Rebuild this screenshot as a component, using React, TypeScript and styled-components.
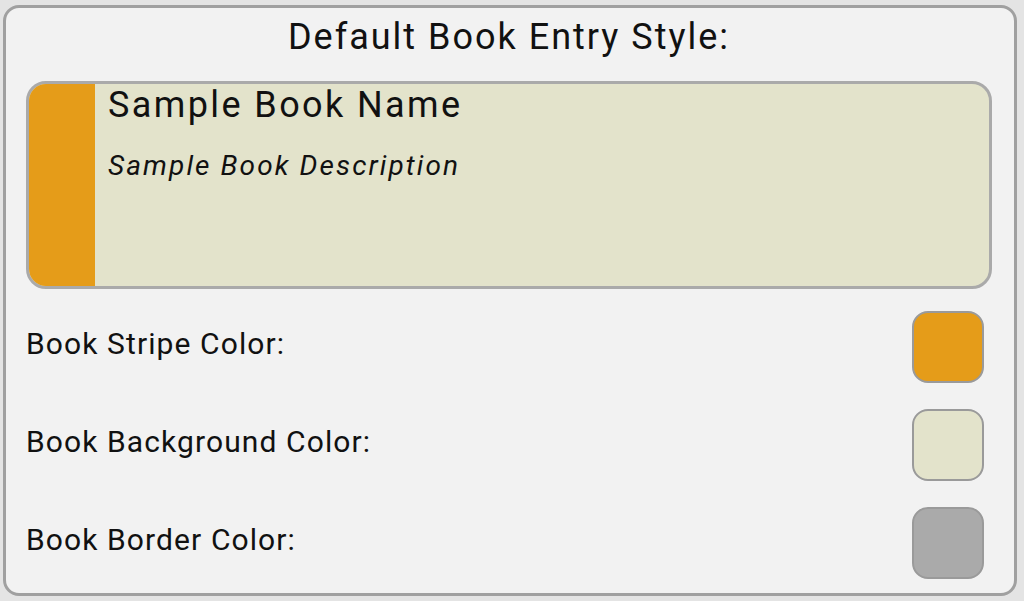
import React from "react";
import styled, { createGlobalStyle } from "styled-components";

const Global = createGlobalStyle`
  html, body { margin: 0; padding: 0; background: #e4e4e4; }
  body { font-family: Roboto, "Noto Sans", sans-serif; color: #111; }
  * { box-sizing: border-box; }
`;

const Card = styled.div`
  margin: 5px 7px 5px 3px;
  height: 591px;
  border: 3px solid #a0a0a0;
  border-radius: 16px;
  background: #f2f2f2;
  padding: 8px 22px 14px 20px;
  display: flex;
  flex-direction: column;
`;

const Title = styled.h1`
  margin: 0;
  font-size: 36px;
  font-weight: 400;
  line-height: 42px;
  letter-spacing: 2px;
  text-align: center;
`;

const Preview = styled.div<{ $bg: string; $border: string }>`
  margin-top: 23px;
  height: 208px;
  display: flex;
  border: 3px solid ${(p) => p.$border};
  border-radius: 20px;
  background: ${(p) => p.$bg};
  overflow: hidden;
`;

const Stripe = styled.div<{ $color: string }>`
  width: 66px;
  flex: none;
  background: ${(p) => p.$color};
`;

const PreviewBody = styled.div`
  padding-left: 13px;
  display: flex;
  flex-direction: column;
`;

const BookName = styled.div`
  font-size: 36px;
  line-height: 42px;
  letter-spacing: 2.4px;
`;

const BookDesc = styled.div`
  margin-top: 23px;
  font-size: 28px;
  line-height: 33px;
  letter-spacing: 2.1px;
  font-style: italic;
`;

const Rows = styled.div`
  margin-top: 22px;
  display: flex;
  flex-direction: column;
  gap: 26px;
  padding: 0 8px 0 0;
`;

const Row = styled.div`
  display: flex;
  align-items: center;
  justify-content: space-between;
  height: 72px;
`;

const Label = styled.span`
  font-size: 30px;
  line-height: 36px;
  letter-spacing: 1.1px;
  margin-top: -6px;
`;

const Swatch = styled.div<{ $color: string }>`
  width: 72px;
  height: 72px;
  border-radius: 16px;
  border: 2px solid #9a9a9a;
  background: ${(p) => p.$color};
`;

const STRIPE = "#e59c19";
const BG = "#e3e3cb";
const BORDER = "#aaaaaa";

const rows = [
  { label: "Book Stripe Color:", color: STRIPE },
  { label: "Book Background Color:", color: BG },
  { label: "Book Border Color:", color: BORDER },
];

export default function App() {
  return (
    <>
      <Global />
      <Card>
        <Title>Default Book Entry Style:</Title>
        <Preview $bg={BG} $border={BORDER}>
          <Stripe $color={STRIPE} />
          <PreviewBody>
            <BookName>Sample Book Name</BookName>
            <BookDesc>Sample Book Description</BookDesc>
          </PreviewBody>
        </Preview>
        <Rows>
          {rows.map((r) => (
            <Row key={r.label}>
              <Label>{r.label}</Label>
              <Swatch $color={r.color} />
            </Row>
          ))}
        </Rows>
      </Card>
    </>
  );
}
